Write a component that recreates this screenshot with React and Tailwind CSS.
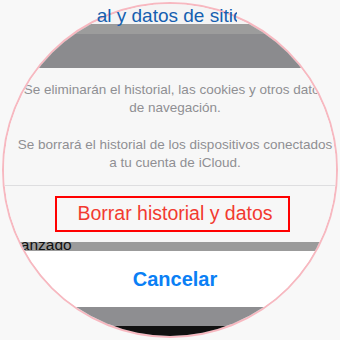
const FONT = { fontFamily: '"Liberation Sans", Arial, sans-serif' }

function Message({ lines }) {
  return (
    <p className="text-center text-[13.5px] leading-[18px] text-[#8f8f93]">
      {lines.map((line) => (
        <span key={line} className="block whitespace-nowrap">
          {line}
        </span>
      ))}
    </p>
  )
}

export default function App() {
  return (
    <div
      className="relative flex h-[340px] w-[340px] items-center justify-center overflow-hidden bg-[#f8f8f8]"
      style={FONT}
    >
      <div className="flex h-[336px] w-[336px] flex-col overflow-hidden rounded-full border-2 border-[#f7b8c0]">
        {/* dimmed page behind the sheet */}
        <div className="h-[20px] shrink-0 bg-[#f4f4f4]" />
        <div className="h-[10px] shrink-0 bg-[#9c9c9c]" />
        <div className="h-[34px] shrink-0 bg-[#8b8b8e]" />

        {/* action sheet */}
        <div className="flex shrink-0 flex-col bg-[#f7f7f7]">
          <div className="flex h-[117px] flex-col items-center gap-[19px] pl-[10px] pt-[13px]">
            <Message
              lines={[
                'Se eliminarán el historial, las cookies y otros datos',
                'de navegación.',
              ]}
            />
            <Message
              lines={[
                'Se borrará el historial de los dispositivos conectados',
                'a tu cuenta de iCloud.',
              ]}
            />
          </div>
          <div className="h-px bg-[#dedee0]" />
          <div className="flex h-[56px] items-center justify-center pl-[5px]">
            <div className="flex h-[36px] w-[235px] items-center justify-center border-2 border-[#ff0000] pl-[5px]">
              <span className="whitespace-nowrap text-[19.5px] text-[#f23a30]">
                Borrar historial y datos
              </span>
            </div>
          </div>
        </div>

        <div className="h-[9px] shrink-0 overflow-hidden bg-[#9b9b9b]">
          <span className="-mt-[6px] ml-[-1px] block whitespace-nowrap text-[15.5px] leading-[18px] text-[#111]">
            Avanzado
          </span>
        </div>

        <div className="flex h-[56px] shrink-0 items-center justify-center bg-white pl-[10px]">
          <span className="text-[20px] font-semibold text-[#0a7ff5]">Cancelar</span>
        </div>

        <div className="h-[19px] shrink-0 bg-[#8e8e91]" />
        <div className="flex-1 bg-[#111]" />
      </div>

      {/* header title peeking above the dimmed page */}
      <div className="absolute left-[97px] top-[5px] h-[21px] w-[140px] overflow-hidden whitespace-nowrap">
        <span className="-ml-[51px] block text-[19px] leading-[21px] text-[#155fb0]">
          historial y datos de sitios web
        </span>
      </div>
    </div>
  )
}
